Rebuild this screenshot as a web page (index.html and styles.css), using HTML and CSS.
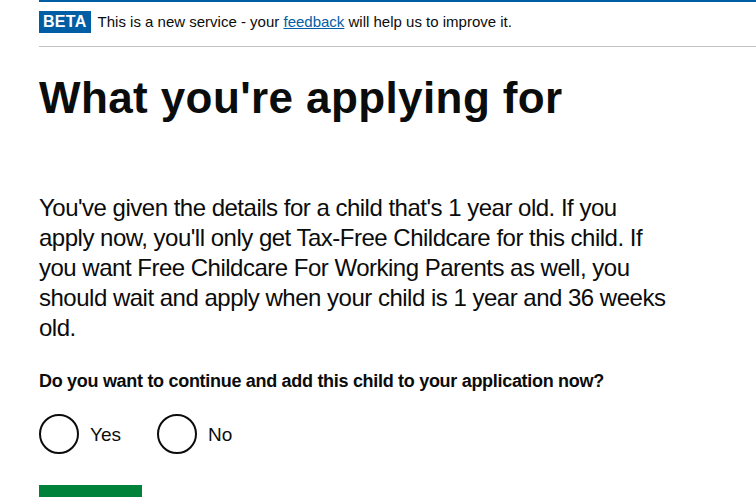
FILE: index.html
```html
<!DOCTYPE html>
<html lang="en">
<head>
    <meta charset="UTF-8">
    <meta name="viewport" content="width=device-width, initial-scale=1.0">
    <title>What you're applying for</title>
    <link rel="stylesheet" href="styles.css">
</head>
<body>
    <div class="page">
        <div class="phase-banner">
            <strong class="phase-tag">BETA</strong>
            <span class="phase-text">This is a new service - your <a href="#">feedback</a> will help us to improve it.</span>
        </div>

        <main class="main">
            <h1 class="heading">What you're applying for</h1>

            <p class="lead">You've given the details for a child that's 1 year old. If you apply now, you'll only get Tax-Free Childcare for this child. If you want Free Childcare For Working Parents as well, you should wait and apply when your child is 1 year and 36 weeks old.</p>

            <form class="question">
                <fieldset class="fieldset">
                    <legend class="legend">Do you want to continue and add this child to your application now?</legend>
                    <div class="radios">
                        <label class="radio">
                            <input type="radio" name="addChild" value="yes">
                            <span class="radio-circle"></span>
                            <span class="radio-label">Yes</span>
                        </label>
                        <label class="radio">
                            <input type="radio" name="addChild" value="no">
                            <span class="radio-circle"></span>
                            <span class="radio-label">No</span>
                        </label>
                    </div>
                </fieldset>
                <button type="submit" class="button">Continue</button>
            </form>
        </main>
    </div>
</body>
</html>
```

FILE: styles.css
```css
body {
    margin: 0;
    padding: 0;
    font-family: "Liberation Sans", Arial, sans-serif;
    color: #0b0c0c;
    background: #ffffff;
    overflow: hidden;
}
.page {
    margin-left: 39px;
}
.phase-banner {
    border-top: 2px solid #005ea5;
    border-bottom: 1px solid #bfc1c3;
    padding: 9px 0 13px 0;
    display: flex;
    align-items: center;
    gap: 7px;
}
.phase-tag {
    display: inline-block;
    background: #005ea5;
    color: #ffffff;
    font-size: 16px;
    font-weight: 700;
    letter-spacing: 0.3px;
    line-height: 22px;
    height: 22px;
    padding: 0 4px;
}
.phase-text {
    font-size: 15px;
    line-height: 20px;
}
.phase-text a {
    color: #005ea5;
}
.main {
    width: 633px;
}
.heading {
    font-size: 44px;
    line-height: 48px;
    font-weight: 700;
    letter-spacing: 0.4px;
    margin: 27px 0 71px 0;
}
.lead {
    font-size: 24px;
    line-height: 30px;
    letter-spacing: -0.5px;
    margin: 0 0 26px 0;
}
.fieldset {
    border: none;
    margin: 0;
    padding: 0;
}
.legend {
    font-size: 18px;
    line-height: 25px;
    font-weight: 700;
    letter-spacing: -0.3px;
    padding: 0;
    margin-bottom: 20px;
}
.radios {
    display: flex;
    gap: 36px;
}
.radio {
    display: flex;
    align-items: center;
    gap: 11px;
    cursor: pointer;
}
.radio input {
    display: none;
}
.radio-circle {
    width: 40px;
    height: 40px;
    box-sizing: border-box;
    border: 2px solid #0b0c0c;
    border-radius: 50%;
}
.radio-label {
    font-size: 19px;
    line-height: 25px;
}
.button {
    display: block;
    margin-top: 31px;
    width: 103px;
    background: #00823b;
    color: #ffffff;
    border: none;
    font-family: inherit;
    font-size: 19px;
    line-height: 25px;
    padding: 24px 10px 7px 10px;
    box-shadow: 0 2px 0 #003618;
}
```
